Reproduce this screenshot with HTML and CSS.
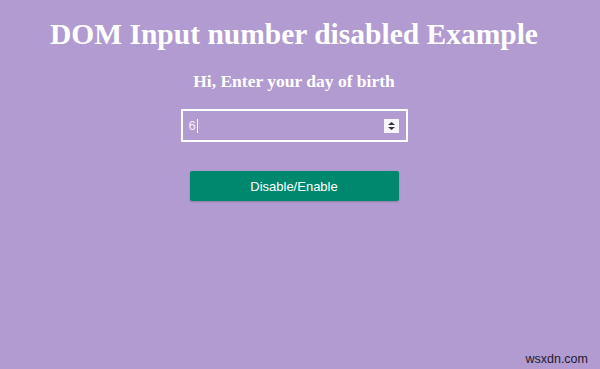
FILE: index.html
```html
<!DOCTYPE html>
<html lang="en">
<head>
  <meta charset="UTF-8">
  <title>DOM Input number disabled</title>
  <link rel="stylesheet" href="styles.css">
</head>
<body>
  <div class="page">
    <h1 class="title">DOM Input number disabled Example</h1>
    <h3 class="subtitle">Hi, Enter your day of birth</h3>

    <div class="field">
      <span class="value">6</span><span class="caret"></span>
      <span class="spin">
        <svg width="9" height="10" viewBox="0 0 9 10">
          <path d="M4.5 1 L8 4 H1 Z" fill="#333"/>
          <path d="M4.5 9 L8 6 H1 Z" fill="#333"/>
        </svg>
      </span>
    </div>

    <button class="btn" type="button">Disable/Enable</button>
  </div>

  <div class="mark">wsxdn.com</div>
</body>
</html>
```

FILE: styles.css
```css
* {
  box-sizing: border-box;
  margin: 0;
  padding: 0;
}

html, body {
  height: 100%;
}

body {
  background: #b19bd0;
  font-family: 'Liberation Serif', 'Times New Roman', serif;
  overflow: hidden;
  position: relative;
}

.page {
  width: 588px;
  display: flex;
  flex-direction: column;
  align-items: center;
  padding-top: 16px;
}

.title {
  font-size: 29.5px;
  font-weight: 700;
  color: #ffffff;
  line-height: 36px;
}

.subtitle {
  font-size: 17.5px;
  font-weight: 700;
  color: #ffffff;
  margin-top: 18px;
  line-height: 22px;
}

/* number input look-alike */
.field {
  width: 227px;
  height: 33px;
  margin-top: 17px;
  border: 2px solid #ffffff;
  display: flex;
  align-items: center;
  padding: 0 7px 0 6px;
  font-family: 'Liberation Sans', Arial, sans-serif;
  font-size: 13px;
  color: #f4f0fa;
}

.caret {
  width: 1px;
  height: 14px;
  background: #ffffff;
  margin-left: 1px;
}

.spin {
  margin-left: auto;
  width: 15px;
  height: 14px;
  background: #f7f5fa;
  display: flex;
  align-items: center;
  justify-content: center;
}

.btn {
  width: 209px;
  height: 30px;
  margin-top: 29px;
  border: none;
  border-radius: 2px;
  background: #00886f;
  color: #ffffff;
  font-family: 'Liberation Sans', Arial, sans-serif;
  font-size: 13px;
  box-shadow: 0 1px 2px rgba(0, 0, 0, 0.2);
}

.mark {
  position: absolute;
  right: 12px;
  bottom: 3px;
  font-family: 'Liberation Sans', Arial, sans-serif;
  font-size: 12.5px;
  color: #1f1a33;
}
```
